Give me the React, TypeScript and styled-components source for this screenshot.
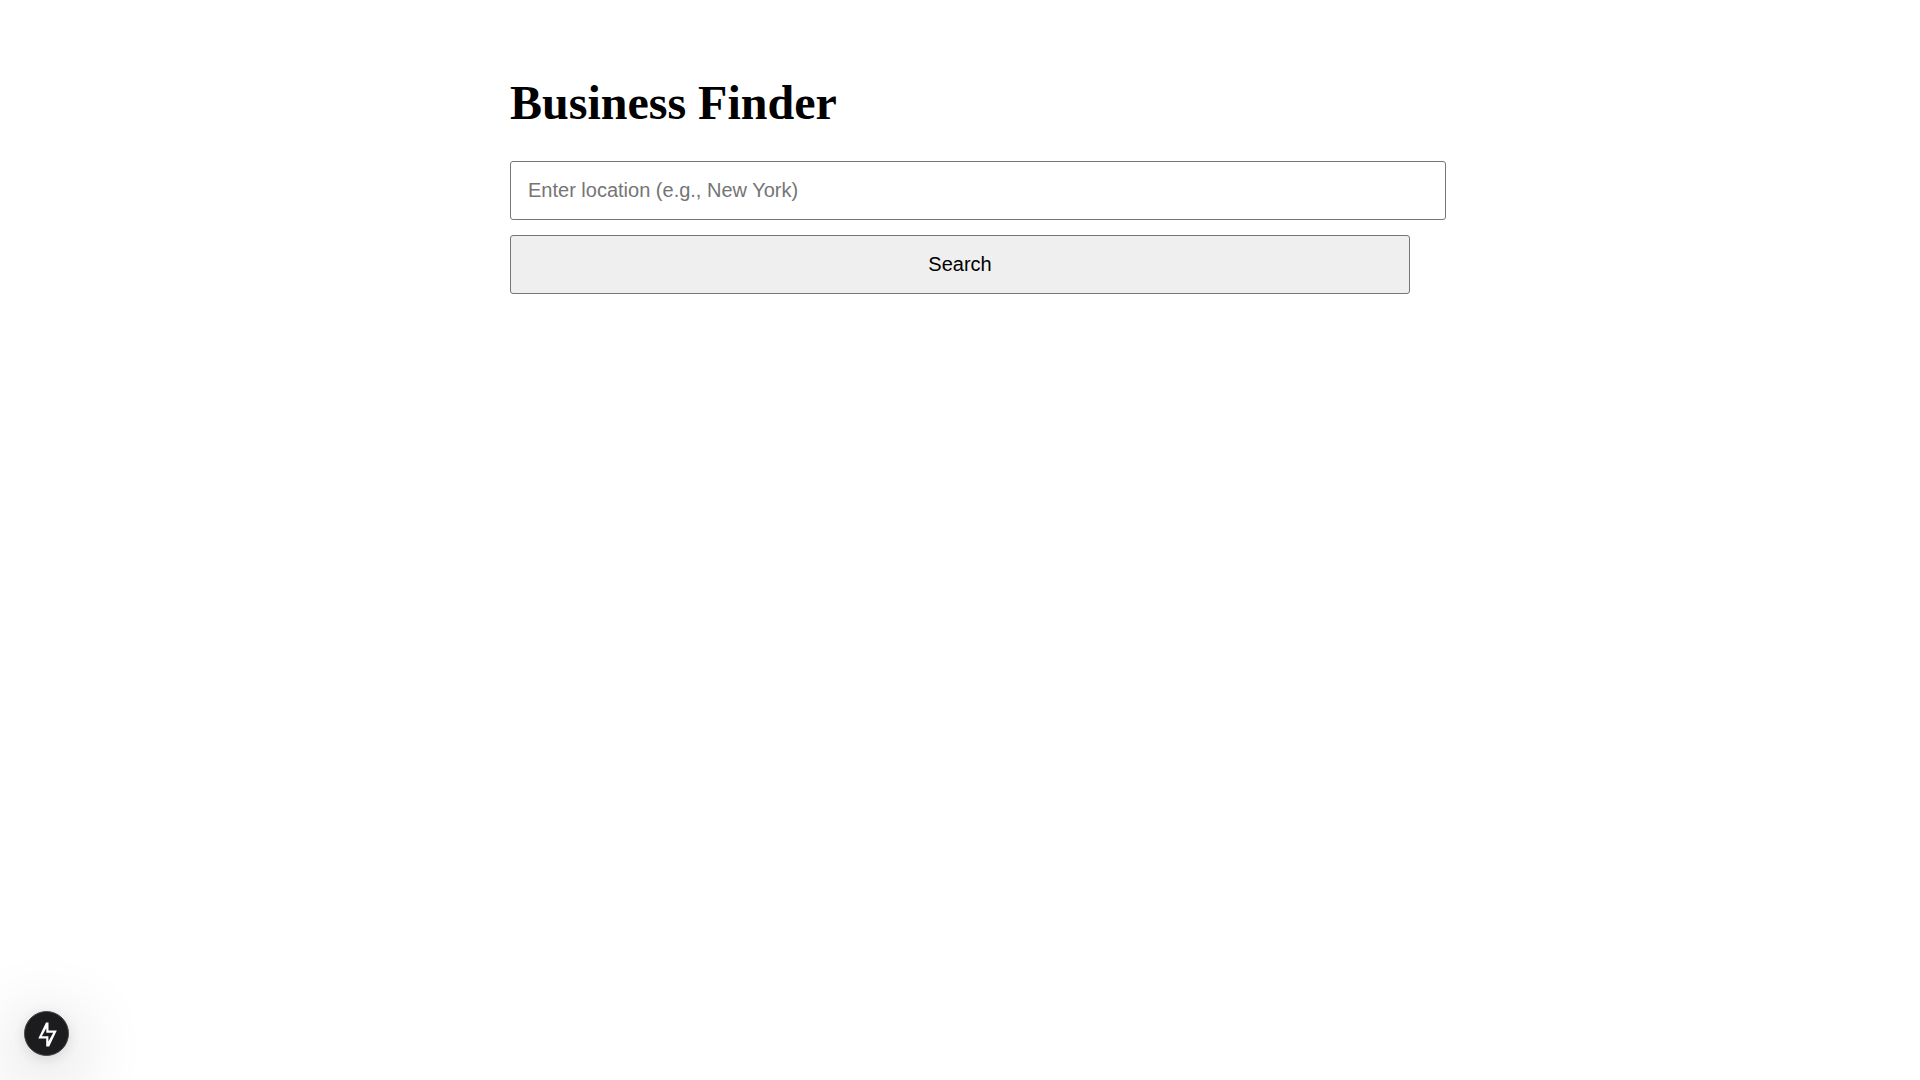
import React, { useState } from "react";
import styled, { createGlobalStyle } from "styled-components";

const GlobalStyle = createGlobalStyle`
  body {
    margin: 0;
    background: #fff;
    color: #000;
    font-family: "Liberation Serif", "Times New Roman", serif;
  }
`;

const Page = styled.main`
  max-width: 900px;
  margin: 0 auto;
  padding-top: 75px;
`;

const Title = styled.h1`
  margin: 0 0 30px;
  font-size: 48px;
  line-height: 56px;
  font-weight: 700;
`;

const SearchForm = styled.form`
  display: flex;
  flex-direction: column;
  gap: 15px;
`;

const LocationInput = styled.input`
  box-sizing: content-box;
  width: 100%;
  height: 23px;
  margin: 0;
  padding: 17px;
  border: 1px solid #767676;
  border-radius: 3px;
  background: #fff;
  color: #000;
  font-family: "Liberation Sans", Arial, sans-serif;
  font-size: 20px;

  &::placeholder {
    color: #757575;
  }
`;

const SearchButton = styled.button`
  width: 100%;
  margin: 0;
  padding: 17px;
  border: 1px solid #767676;
  border-radius: 3px;
  background: #efefef;
  color: #000;
  font-family: "Liberation Sans", Arial, sans-serif;
  font-size: 20px;
  line-height: 23px;
`;

const DevIndicator = styled.button`
  position: fixed;
  left: 24px;
  bottom: 24px;
  display: flex;
  align-items: center;
  justify-content: center;
  width: 45px;
  height: 45px;
  padding: 0;
  border: 1px solid #464646;
  border-radius: 50%;
  background: #1c1c1e;
  box-shadow: 0 16px 76px rgba(0, 0, 0, 0.32), 0 3px 15px rgba(0, 0, 0, 0.12);
`;

export default function App() {
  const [location, setLocation] = useState("");

  return (
    <>
      <GlobalStyle />
      <Page>
        <Title>Business Finder</Title>
        <SearchForm onSubmit={(event) => event.preventDefault()}>
          <LocationInput
            type="text"
            aria-label="Location"
            placeholder="Enter location (e.g., New York)"
            value={location}
            onChange={(event) => setLocation(event.target.value)}
          />
          <SearchButton type="submit">Search</SearchButton>
        </SearchForm>
      </Page>
      <DevIndicator type="button" aria-label="Static route">
        <svg width="26" height="26" viewBox="0 0 26 26" aria-hidden="true">
          <path
            d="M12 1.5H14.5V9.5H22.8L15.2 25.5H12.2V17.5H4.3ZM12.3 7.2V11.8H19.2L14.4 20.4V15.3H7.8Z"
            fill="#fff"
            fillRule="evenodd"
          />
        </svg>
      </DevIndicator>
    </>
  );
}
